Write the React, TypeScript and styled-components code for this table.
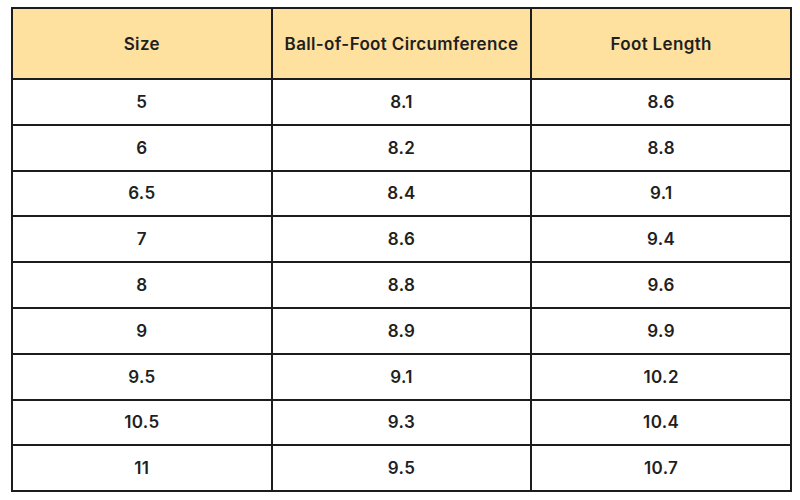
import React from 'react';
import styled, { createGlobalStyle } from 'styled-components';

const rows: [string, string, string][] = [
  ['5', '8.1', '8.6'],
  ['6', '8.2', '8.8'],
  ['6.5', '8.4', '9.1'],
  ['7', '8.6', '9.4'],
  ['8', '8.8', '9.6'],
  ['9', '8.9', '9.9'],
  ['9.5', '9.1', '10.2'],
  ['10.5', '9.3', '10.4'],
  ['11', '9.5', '10.7'],
];

const App: React.FC = () => (
  <>
    <GlobalStyle />
    <Page>
      <SizeTable>
        <thead>
          <tr>
            <HeadCell>Size</HeadCell>
            <HeadCell>Ball-of-Foot Circumference</HeadCell>
            <HeadCell>Foot Length</HeadCell>
          </tr>
        </thead>
        <tbody>
          {rows.map((r) => (
            <tr key={r[0]}>
              {r.map((v, i) => (
                <Cell key={i}>{v}</Cell>
              ))}
            </tr>
          ))}
        </tbody>
      </SizeTable>
    </Page>
  </>
);

export default App;

const GlobalStyle = createGlobalStyle`
  html, body {
    margin: 0;
    background: #ffffff;
  }
  body {
    font-family: Inter, 'Open Sans', sans-serif;
    color: #1f1f1f;
  }
`;

const Page = styled.div`
  width: 800px;
  height: 500px;
  padding: 7px 0 0 11px;
  box-sizing: border-box;
`;

const SizeTable = styled.table`
  width: 781px;
  border-collapse: collapse;
  table-layout: fixed;
  border: 2px solid #1c1c1c;
`;

const HeadCell = styled.th`
  height: 69px;
  padding: 0;
  background: #fee19f;
  border: 2px solid #1c1c1c;
  font-size: 17px;
  font-weight: 600;
  letter-spacing: 0.35px;
  text-align: center;
  vertical-align: middle;
`;

const Cell = styled.td`
  height: 43.8px;
  padding: 0;
  border: 2px solid #1c1c1c;
  font-size: 17px;
  font-weight: 600;
  letter-spacing: 0.35px;
  text-align: center;
  vertical-align: middle;
`;
